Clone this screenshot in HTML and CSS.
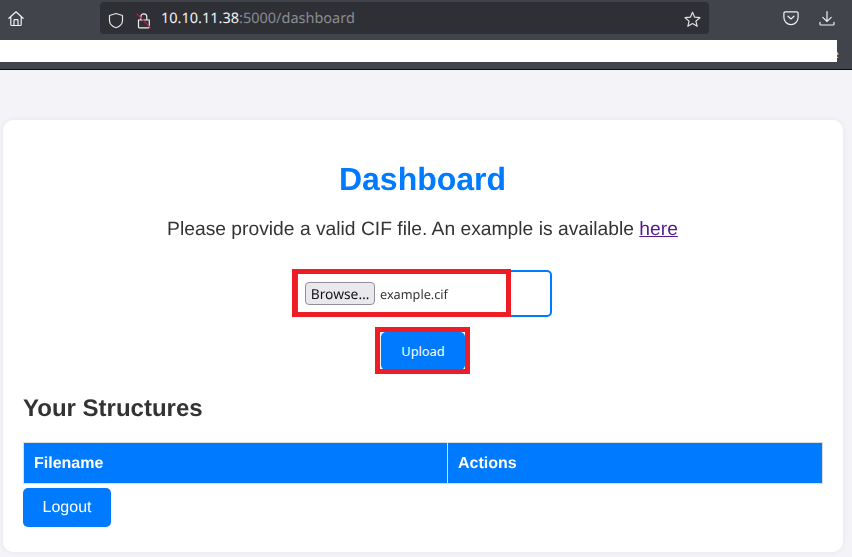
FILE: index.html
```html
<!DOCTYPE html>
<html lang="en">
<head>
<meta charset="utf-8">
<title>Dashboard</title>
<link rel="stylesheet" href="styles.css">
</head>
<body>
<header class="chrome">
  <div class="toolbar">
    <svg class="tool-icon home" viewBox="0 0 16 16" width="16" height="17"><path d="M.9 7.800 8 1.300l7.100 6.500M2.800 6.200V14a1 1 0 0 0 1 1h8.400a1 1 0 0 0 1-1V6.200M6 15V10a.8.8 0 0 1 .8-.8h2.400a.8.8 0 0 1 .8.8v5" fill="none" stroke="#f2f2f4" stroke-width="1.200" stroke-linejoin="round" stroke-linecap="round"/></svg>
    <div class="urlbar">
      <svg class="shield" viewBox="0 0 16 16" width="16" height="17"><path d="M8 1 14.500 3v5c0 3.400-2.700 5.900-6.500 7.200C4.200 13.900 1.500 11.400 1.500 8V3z" fill="none" stroke="#e4e4e6" stroke-width="1.200" stroke-linejoin="round"/></svg>
      <svg class="lock" viewBox="0 0 16 16" width="16" height="17"><path d="M4.800 7.500V4.300a3 3 0 0 1 6 0v3.200M2.500 7.500h10.800v7a.8.800 0 0 1-.8.800H3.300a.8.800 0 0 1-.8-.8z" fill="none" stroke="#eeeef0" stroke-width="1.200"/><path d="M.8 1.200 14.800 15.600" stroke="#d8113f" stroke-width="1.200"/></svg>
      <span class="url"><span class="host">10.10.11.38</span>:5000/dashboard</span>
      <svg class="star" viewBox="0 0 16 16" width="17" height="17"><path d="M8 1.200 10 5.800l5 .5-3.800 3.200 1.200 4.900L8 11.800l-4.400 2.600 1.200-4.900L1 6.300l5-.5z" fill="none" stroke="#e4e4e6" stroke-width="1.100" stroke-linejoin="round"/></svg>
    </div>
    <svg class="tool-icon pocket" viewBox="0 0 16 16" width="16" height="16"><path d="M2.400 1.800h11.200a1.500 1.500 0 0 1 1.500 1.500v4.200a7.100 7.100 0 0 1-14.200 0V3.300a1.500 1.500 0 0 1 1.500-1.500z" fill="none" stroke="#f2f2f4" stroke-width="1.200"/><path d="M5 6.200 8 9l3-2.800" fill="none" stroke="#f2f2f4" stroke-width="1.200" stroke-linecap="round"/></svg>
    <svg class="tool-icon download" viewBox="0 0 16 16" width="16" height="17"><path d="M8 1v10M3.800 6.800 8 11l4.200-4.200M1 11.800v1.900a.8.800 0 0 0 .8.8h12.400a.8.800 0 0 0 .8-.8v-1.900" fill="none" stroke="#f2f2f4" stroke-width="1.200" stroke-linecap="round"/></svg>
  </div>
  <div class="bookmarks">
    <span class="peek peek-1">p</span>
    <span class="peek peek-2">g</span>
    <span class="peek peek-3">g</span>
    <span class="peek peek-4">g</span>
    <span class="peek peek-5">g</span>
    <span class="peek peek-6">e</span>
    <div class="redaction"></div>
  </div>
</header>
<main class="page">
  <section class="card">
    <h1 class="title">Dashboard</h1>
    <p class="lead">Please provide a valid CIF file. An example is available <a class="link" href="#">here</a></p>
    <form class="upload-form">
      <div class="file-field">
        <span class="browse">Browse…</span>
        <span class="filename">example.cif</span>
        <span class="mark mark-file"></span>
      </div>
      <div class="upload-wrap">
        <button class="upload" type="button">Upload</button>
        <span class="mark mark-upload"></span>
      </div>
    </form>
    <h2 class="subtitle">Your Structures</h2>
    <table class="table">
      <thead>
        <tr><th class="col-name">Filename</th><th>Actions</th></tr>
      </thead>
    </table>
    <a class="logout" href="#">Logout</a>
  </section>
</main>
</body>
</html>
```
FILE: styles.css
```css
* { box-sizing: border-box; }
html, body { margin: 0; height: 100%; overflow: hidden; }
body { width: 852px; height: 557px; background: #f3f3f8; font-family: "Liberation Sans", Arial, sans-serif; color: #333; text-rendering: geometricPrecision; }

.chrome { height: 70px; background: #42444c; border-bottom: 1px solid #0c0c10; will-change: opacity; }
.toolbar { height: 40px; display: flex; align-items: center; padding: 0 0 0 8px; }
.tool-icon { flex: none; display: block; }
.home { margin-top: -4px; }
.urlbar { width: 609px; height: 32px; margin-left: 76px; margin-top: -4px; background: #2f3035; border-radius: 4px; display: flex; align-items: center; padding: 0 8px; }
.shield { flex: none; margin-top: 4px; }
.lock { margin-left: 12px; flex: none; margin-top: 4px; }
.url { margin-left: 9px; font: 14.500px "Noto Sans", sans-serif; color: #8b8b90; flex: 1; }
.host { color: #f4f4f6; }
.star { flex: none; margin-top: 2px; }
.pocket { margin-left: 74px; margin-top: -4px; }
.download { margin-left: 20px; margin-top: -4px; }

.bookmarks { position: relative; height: 29px; }
.redaction { position: relative; width: 837px; height: 22px; background: #fff; }
.peek { position: absolute; top: 7px; font: 12px/14px "Noto Sans", sans-serif; color: #d8d8dc; }
.peek-1 { left: 449px; }
.peek-2 { left: 566px; }
.peek-3 { left: 634px; }
.peek-4 { left: 798px; }
.peek-5 { left: 822px; }
.peek-6 { left: 832px; }

.page { padding: 50px 9px 5px 3px; }
.card { height: 432px; background: #fff; border-radius: 10px; padding: 41px 21px 0 20px; box-shadow: 0 0 6px rgba(0, 0, 0, 0.06); will-change: opacity; }
.title { margin: 0; color: #007bff; font-size: 32px; line-height: 37px; font-weight: 700; text-align: center; }
.lead { margin: 21px 0 0; font-size: 19.280px; line-height: 22px; text-align: center; }
.link { color: #551a8b; }

.upload-form { margin-top: 29px; display: flex; flex-direction: column; align-items: center; }
.file-field { position: relative; width: 256px; height: 47px; margin-left: 3px; border: 2px solid #007bff; border-radius: 5px; display: flex; align-items: center; padding: 0 7px; font: 12.700px "Noto Sans", sans-serif; }
.browse { width: 70px; height: 23px; padding-top: 1px; display: flex; align-items: center; justify-content: center; background: #e9e9ed; border: 1px solid #8f8f9d; border-radius: 4px; font-size: 13.800px; color: #15141a; }
.filename { margin-left: 5px; color: #333; }
.mark { position: absolute; border: 5px solid #ee1c25; pointer-events: none; }
.mark-file { left: -6px; top: -3px; width: 219px; height: 48px; }
.upload-wrap { position: relative; margin-top: 15px; margin-left: 1px; }
.upload { display: block; width: 84px; height: 38px; border: 0; border-radius: 5px; background: #007bff; color: #fff; font: 12.800px "Noto Sans", sans-serif; }
.mark-upload { left: -6px; top: -5px; width: 95px; height: 47px; }

.subtitle { margin: 25px 0 0; font-size: 24px; line-height: 28px; font-weight: 700; color: #333; }
.table { width: 800px; margin-top: 19px; border-collapse: collapse; }
.table th { height: 41px; padding: 2px 10px 0; background: #007bff; border: 1px solid #ddd; color: #fff; font-size: 16px; font-weight: 700; text-align: left; }
.col-name { width: 424px; }
.logout { display: block; width: 88px; height: 39px; margin-top: 4px; background: #007bff; border-radius: 5px; color: #fff; font-size: 16px; line-height: 40px; text-align: center; text-decoration: none; }
```
